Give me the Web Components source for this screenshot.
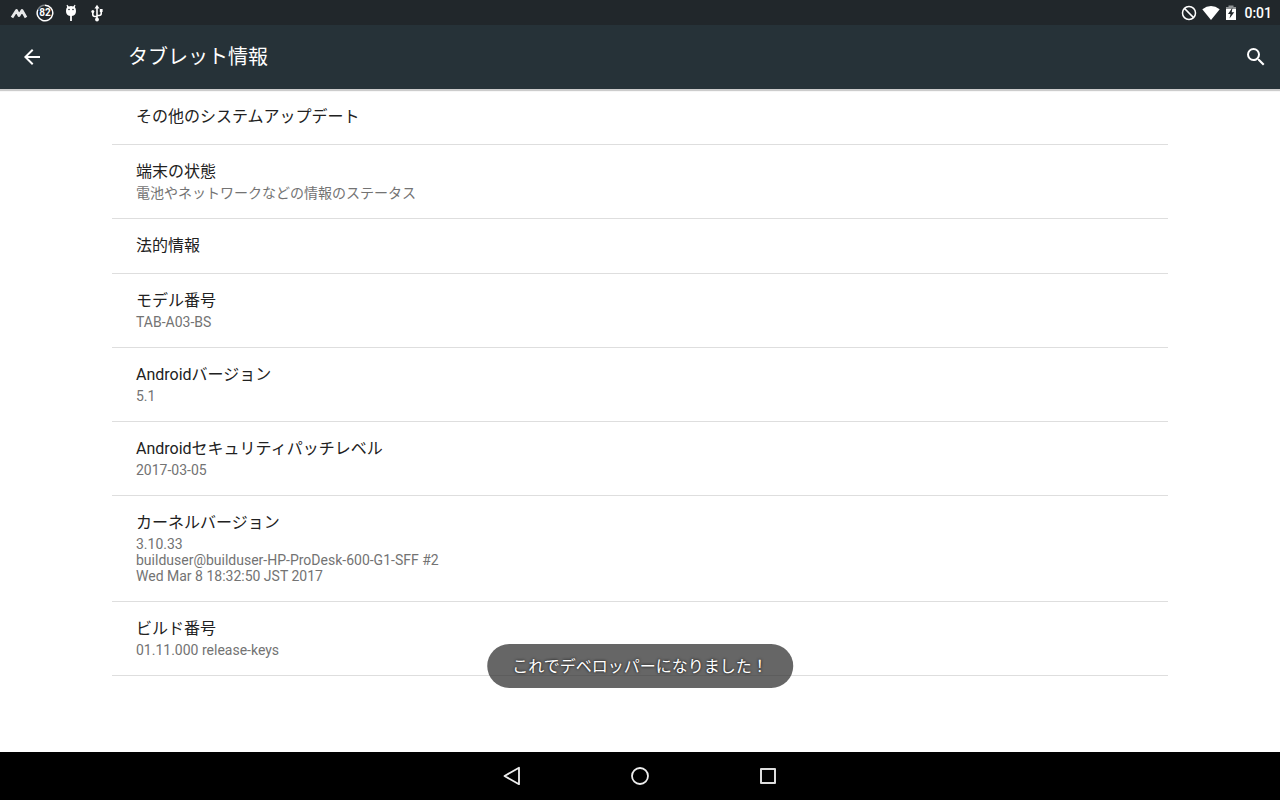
<!DOCTYPE html>
<html lang="ja">
<head>
<meta charset="utf-8">
<meta name="viewport" content="width=device-width, initial-scale=1">
<title>タブレット情報</title>
<style>
    body {
        margin: 0;
        font-family: Roboto, "Noto Sans CJK JP", sans-serif;
        background: #fff;
    }
</style>
</head>
<body>
<settings-screen>
    <status-bar slot="status" time="0:01" battery="82"></status-bar>
    <app-bar slot="header">タブレット情報</app-bar>

    <preference-item>その他のシステムアップデート</preference-item>
    <preference-item>端末の状態<span slot="summary">電池やネットワークなどの情報のステータス</span></preference-item>
    <preference-item>法的情報</preference-item>
    <preference-item>モデル番号<span slot="summary">TAB-A03-BS</span></preference-item>
    <preference-item>Androidバージョン<span slot="summary">5.1</span></preference-item>
    <preference-item>Androidセキュリティパッチレベル<span slot="summary">2017-03-05</span></preference-item>
    <preference-item>カーネルバージョン<span slot="summary">3.10.33<br>builduser@builduser-HP-ProDesk-600-G1-SFF #2<br>Wed Mar 8 18:32:50 JST 2017</span></preference-item>
    <preference-item>ビルド番号<span slot="summary">01.11.000 release-keys</span></preference-item>

    <toast-message slot="toast">これでデベロッパーになりました！</toast-message>
    <navigation-bar slot="navigation"></navigation-bar>
</settings-screen>

<script>
class SettingsScreen extends HTMLElement {
    constructor() {
        super();

        const shadowRoot = this.attachShadow({mode: 'open'});

        shadowRoot.innerHTML = `
            <style>
                :host {
                    position: relative;
                    display: flex;
                    flex-direction: column;
                    min-height: 100vh;
                }

                main {
                    flex: 1;
                    padding: 1px 112px 0;
                }
            </style>
            <slot name="status"></slot>
            <slot name="header"></slot>
            <main><slot></slot></main>
            <slot name="navigation"></slot>
            <slot name="toast"></slot>
        `;
    }
}

class StatusBar extends HTMLElement {
    constructor() {
        super();

        const shadowRoot = this.attachShadow({mode: 'open'});

        shadowRoot.innerHTML = `
            <style>
                :host {
                    display: flex;
                    justify-content: space-between;
                    align-items: center;
                    height: 25px;
                    padding: 0 8px 0 10px;
                    background: #21272b;
                    color: #fff;
                }

                .group {
                    display: flex;
                    align-items: center;
                }

                .notifications {
                    gap: 8px;
                }

                .system {
                    gap: 4px;
                }

                svg {
                    display: block;
                }

                .battery {
                    display: grid;
                    place-items: center;
                    font-size: 10px;
                    line-height: 18px;
                    font-weight: 700;
                }

                .battery > * {
                    grid-area: 1 / 1;
                }

                time {
                    font-size: 14px;
                    line-height: 24px;
                    font-weight: 500;
                    margin-left: 2px;
                }
            </style>
            <div class="group notifications">
                <svg width="18" height="18" viewBox="0 0 18 18" fill="none" stroke="#e8e9ea" stroke-width="2.800" stroke-linejoin="round">
                    <path d="M2 13.500 6.500 6.500 9 11.500 12 6.500 16 13.500"/>
                </svg>
                <div class="battery">
                    <svg width="18" height="18" viewBox="0 0 18 18" fill="none" stroke="#fff" stroke-width="1.500">
                        <path d="M9 1.200A7.800 7.800 0 1 1 2 5.500"/>
                        <path d="M2 5.500A7.800 7.800 0 0 1 9 1.200" stroke="#7b8083"/>
                    </svg>
                    <span class="level"></span>
                </div>
                <svg width="18" height="18" viewBox="0 0 18 18" fill="#fff">
                    <path d="M4 7Q4 4.300 5.200 3L4.500 1.300 5.300.8 6.800 2.400Q9 1.800 11.200 2.400L12.700.8 13.500 1.300 12.800 3Q14 4.300 14 7Q14 11.500 9.900 12V17H8.100V12Q4 11.500 4 7Z"/>
                    <circle cx="7" cy="5.500" r=".8" fill="#21272b"/>
                    <circle cx="11" cy="5.500" r=".8" fill="#21272b"/>
                </svg>
                <svg width="18" height="18" viewBox="0 0 18 18" fill="none" stroke="#fff" stroke-width="1.600">
                    <path d="M9 3V15M9 12.500H7Q4.800 12.500 4.800 10.500V8M9 11.500H11Q13.200 11.500 13.200 9.500V7"/>
                    <path d="M9 .8 11.500 4.500H6.500Z" fill="#fff" stroke="none"/>
                    <circle cx="4.800" cy="7.500" r="1.500" fill="#fff" stroke="none"/>
                    <path d="M11.800 5H14.600V8H11.800Z" fill="#fff" stroke="none"/>
                    <circle cx="9" cy="15.500" r="1.900" fill="#fff" stroke="none"/>
                </svg>
            </div>
            <div class="group system">
                <svg width="18" height="18" viewBox="0 0 18 18" fill="none" stroke="#fff" stroke-width="1.500">
                    <circle cx="9" cy="9" r="6.500"/>
                    <path d="M4.400 4.400 13.600 13.600"/>
                </svg>
                <svg width="18" height="18" viewBox="0 0 18 18" fill="#fff">
                    <path d="M9 16 .3 5.200Q9-1 17.700 5.200Z"/>
                </svg>
                <svg width="14" height="18" viewBox="0 0 14 18">
                    <path d="M2 3H4.500V1.500H9.500V3H12V6H2Z" fill="#8f9395"/>
                    <path d="M2 5H12V16H2Z" fill="#fff"/>
                    <path d="M8.500 3.500 4 10H6.500L5.500 14.500 10.200 8.300H7.700Z" fill="#21272b"/>
                </svg>
                <time></time>
            </div>
        `;
    }

    static get observedAttributes() {
        return [ 'time', 'battery' ];
    }

    attributeChangedCallback(name, oldVal, newVal) {
        switch(name){
            case 'time':
                this.shadowRoot.querySelector('time').textContent = newVal;
                break;
            case 'battery':
                this.shadowRoot.querySelector('.level').textContent = newVal;
        }
    }
}

class AppBar extends HTMLElement {
    constructor() {
        super();

        const shadowRoot = this.attachShadow({mode: 'open'});

        shadowRoot.innerHTML = `
            <style>
                :host {
                    display: flex;
                    align-items: center;
                    height: 64px;
                    background: #263238;
                    color: #fff;
                    box-shadow: 0 2px 1px rgba(0, 0, 0, 0.2);
                }

                button {
                    display: grid;
                    place-items: center;
                    width: 64px;
                    height: 64px;
                    padding: 0;
                    border: 0;
                    background: none;
                    color: inherit;
                }

                .search {
                    width: 48px;
                }

                h1 {
                    flex: 1;
                    margin: 0;
                    padding-left: 64px;
                    font-size: 20px;
                    line-height: 28px;
                    font-weight: 400;
                }
            </style>
            <button type="button" aria-label="戻る">
                <svg width="24" height="24" viewBox="0 0 24 24" fill="currentColor">
                    <path d="M20 11H7.830l5.590-5.590L12 4l-8 8 8 8 1.410-1.410L7.830 13H20v-2z"/>
                </svg>
            </button>
            <h1><slot></slot></h1>
            <button type="button" class="search" aria-label="検索">
                <svg width="24" height="24" viewBox="0 0 24 24" fill="currentColor">
                    <path d="M15.500 14h-.79l-.28-.27A6.470 6.470 0 0 0 16 9.500 6.500 6.500 0 1 0 9.500 16c1.610 0 3.090-.59 4.230-1.570l.27.28v.79l5 4.990L20.490 19l-4.990-5zm-6 0C7.010 14 5 11.990 5 9.500S7.010 5 9.500 5 14 7.010 14 9.500 11.990 14 9.500 14z"/>
                </svg>
            </button>
        `;
    }
}

class PreferenceItem extends HTMLElement {
    constructor() {
        super();

        const shadowRoot = this.attachShadow({mode: 'open'});

        shadowRoot.innerHTML = `
            <style>
                :host {
                    display: block;
                    padding: 16px 24px;
                    border-bottom: 1px solid #dedede;
                }

                .title {
                    font-size: 16px;
                    line-height: 22px;
                    font-weight: 400;
                    color: #212121;
                }

                ::slotted([slot="summary"]) {
                    display: block;
                    padding: 2px 0 1px;
                    font-size: 14px;
                    line-height: 16px;
                    color: #737373;
                }
            </style>
            <div class="title"><slot></slot></div>
            <slot name="summary"></slot>
        `;
    }
}

class ToastMessage extends HTMLElement {
    constructor() {
        super();

        const shadowRoot = this.attachShadow({mode: 'open'});

        // floats over the list, above the navigation bar
        shadowRoot.innerHTML = `
            <style>
                :host {
                    position: absolute;
                    left: 50%;
                    bottom: 112px;
                    transform: translateX(-50%);
                    padding: 11px 25px 9px;
                    border-radius: 22px;
                    background: rgba(45, 45, 45, 0.73);
                    color: #fff;
                    font-size: 16px;
                    line-height: 24px;
                    white-space: nowrap;
                    text-shadow: 0 0 3px #000;
                }
            </style>
            <div role="status"><slot></slot></div>
        `;
    }
}

class NavigationBar extends HTMLElement {
    constructor() {
        super();

        const shadowRoot = this.attachShadow({mode: 'open'});

        shadowRoot.innerHTML = `
            <style>
                :host {
                    display: flex;
                    justify-content: center;
                    height: 48px;
                    background: #000;
                }

                button {
                    display: grid;
                    place-items: center;
                    width: 128px;
                    padding: 0;
                    border: 0;
                    background: none;
                }
            </style>
            <button type="button" aria-label="戻る">
                <svg width="24" height="24" viewBox="0 0 24 24" fill="none" stroke="#eee" stroke-width="1.800" stroke-linejoin="round">
                    <path d="M4.500 12 19 3.800V20.200Z"/>
                </svg>
            </button>
            <button type="button" aria-label="ホーム">
                <svg width="24" height="24" viewBox="0 0 24 24" fill="none" stroke="#eee" stroke-width="1.800">
                    <circle cx="12" cy="12" r="8"/>
                </svg>
            </button>
            <button type="button" aria-label="最近使ったアプリ">
                <svg width="24" height="24" viewBox="0 0 24 24" fill="none" stroke="#ddd" stroke-width="2" stroke-linejoin="round">
                    <path d="M5 5H19V19H5Z"/>
                </svg>
            </button>
        `;
    }
}

window.customElements.define('settings-screen', SettingsScreen);
window.customElements.define('status-bar', StatusBar);
window.customElements.define('app-bar', AppBar);
window.customElements.define('preference-item', PreferenceItem);
window.customElements.define('toast-message', ToastMessage);
window.customElements.define('navigation-bar', NavigationBar);
</script>
</body>
</html>
